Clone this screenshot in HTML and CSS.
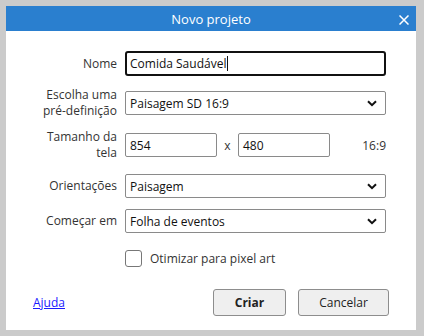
FILE: index.html
```html
<!DOCTYPE html>
<html lang="pt">
<head>
    <meta charset="UTF-8">
    <title>Novo projeto</title>
    <link rel="stylesheet" href="styles.css">
</head>
<body>

<div class="dialog">
    <div class="titlebar">
        <span class="title">Novo projeto</span>
        <svg class="close" width="10" height="10" viewBox="0 0 10 10">
            <path d="M0.5 0.5 L9.5 9.5 M9.5 0.5 L0.5 9.5" stroke="#fff" stroke-width="1.5" fill="none"/>
        </svg>
    </div>

    <div class="form">
        <div class="row row-name">
            <label class="lbl">Nome</label>
            <div class="field text focused">Comida Saudável<span class="caret"></span></div>
        </div>

        <div class="row row-preset">
            <label class="lbl">Escolha uma<br>pré-definição</label>
            <div class="field select">
                <span>Paisagem SD 16:9</span>
                <svg class="chev" width="10" height="7" viewBox="0 0 10 7"><path d="M1 1.2 L5 5.2 L9 1.2" stroke="#111" stroke-width="2" fill="none"/></svg>
            </div>
        </div>

        <div class="row row-size">
            <label class="lbl">Tamanho da<br>tela</label>
            <div class="size">
                <div class="field text num">854</div>
                <span class="times">x</span>
                <div class="field text num">480</div>
                <span class="ratio">16:9</span>
            </div>
        </div>

        <div class="row row-orient">
            <label class="lbl">Orientações</label>
            <div class="field select">
                <span>Paisagem</span>
                <svg class="chev" width="10" height="7" viewBox="0 0 10 7"><path d="M1 1.2 L5 5.2 L9 1.2" stroke="#111" stroke-width="2" fill="none"/></svg>
            </div>
        </div>

        <div class="row row-start">
            <label class="lbl">Começar em</label>
            <div class="field select">
                <span>Folha de eventos</span>
                <svg class="chev" width="10" height="7" viewBox="0 0 10 7"><path d="M1 1.2 L5 5.2 L9 1.2" stroke="#111" stroke-width="2" fill="none"/></svg>
            </div>
        </div>

        <div class="row row-check">
            <span class="lbl"></span>
            <div class="check">
                <span class="box"></span>
                <span>Otimizar para pixel art</span>
            </div>
        </div>
    </div>

    <div class="footer">
        <a href="#" class="help">Ajuda</a>
        <div class="buttons">
            <button class="btn primary">Criar</button>
            <button class="btn">Cancelar</button>
        </div>
    </div>
</div>

</body>
</html>
```

FILE: styles.css
```css
body {
    margin: 0;
    background: #cbcbcb;
    font-family: "Open Sans", "Noto Sans", sans-serif;
    font-size: 12px;
    color: #1a1a1a;
}
.dialog {
    margin: 6px;
    width: 410px;
    height: 324px;
    background: white;
    display: flex;
    flex-direction: column;
}
.titlebar {
    height: 25px;
    background: #2a7fcf;
    color: white;
    display: flex;
    align-items: center;
    justify-content: center;
    position: relative;
}
.title {
    font-size: 13px;
}
.close {
    position: absolute;
    right: 7px;
    top: 9px;
}
.form {
    display: flex;
    flex-direction: column;
    padding-top: 20px;
}
.row {
    display: flex;
    align-items: center;
    height: 24px;
    padding-left: 20px;
    gap: 8px;
}
.row-name { height: 25px; }
.row-preset { margin-top: 15px; }
.row-size { margin-top: 18px; }
.row-orient { margin-top: 17px; }
.row-start { margin-top: 11px; }
.row-check { margin-top: 16px; height: 18px; }
.lbl {
    width: 91px;
    flex: none;
    text-align: right;
    line-height: 16px;
    color: #333;
}
.field {
    box-sizing: border-box;
    height: 100%;
    width: 261px;
    border: 1px solid #8a8a8a;
    border-radius: 2px;
    display: flex;
    align-items: center;
    padding-left: 4px;
    color: #111;
}
.focused {
    border: 2px solid #111;
    border-radius: 3px;
    padding-left: 3px;
}
.caret {
    display: inline-block;
    width: 1px;
    height: 15px;
    background: #111;
    margin-left: 1px;
}
.select {
    justify-content: space-between;
    padding-right: 8px;
}
.size {
    display: flex;
    align-items: center;
    width: 261px;
    height: 100%;
}
.num {
    width: 92px;
}
.times {
    width: 21px;
    text-align: center;
    color: #333;
}
.ratio {
    margin-left: auto;
    color: #333;
}
.check {
    display: flex;
    align-items: center;
    gap: 8px;
    color: #333;
}
.box {
    box-sizing: border-box;
    width: 17px;
    height: 17px;
    border: 1px solid #777;
    border-radius: 3px;
}
.footer {
    display: flex;
    justify-content: space-between;
    align-items: center;
    padding: 0 27px;
    margin-top: 22px;
}
.help {
    color: #1a1aff;
    text-decoration: underline;
}
.buttons {
    display: flex;
    gap: 12px;
}
.btn {
    font-family: inherit;
    font-size: 12px;
    color: #222;
    background: #efefef;
    border: 1px solid #8d8d8d;
    border-radius: 3px;
    height: 27px;
    width: 91px;
}
.primary {
    width: 73px;
    font-weight: bold;
}
```
